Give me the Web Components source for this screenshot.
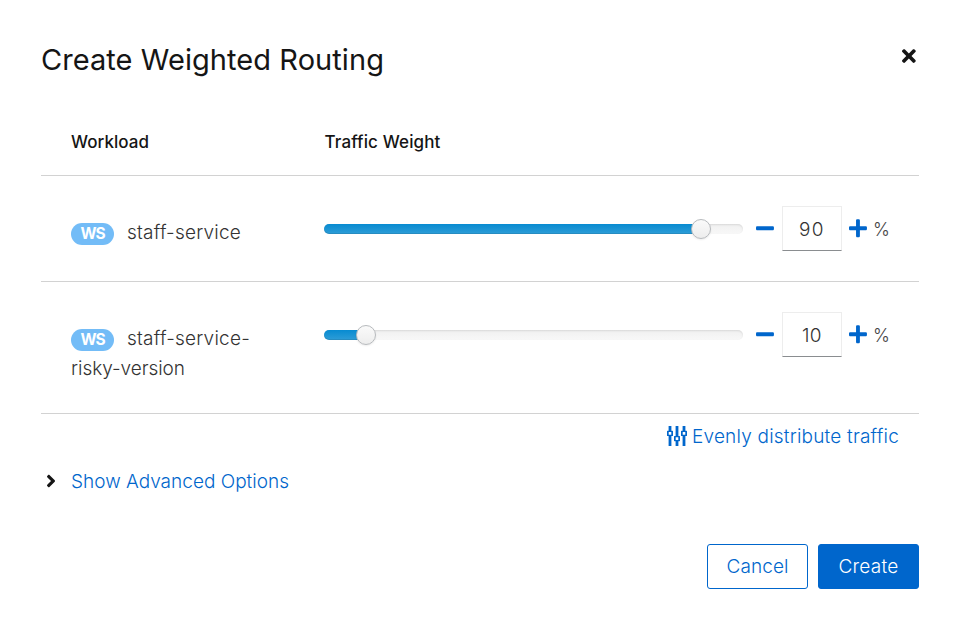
<!DOCTYPE html>
<html lang="en">
<head>
<meta charset="utf-8">
<title>Create Weighted Routing</title>
<style>
html,body{margin:0;background:#fff}
body{font-family:Inter,"Open Sans",sans-serif;font-weight:300;font-size:19px;line-height:30px;color:#151515}
</style>
</head>
<body>
<routing-dialog></routing-dialog>
<script>
// Inline label whose tracking is spread so that the text spans `span` pixels.
class UiText extends HTMLElement{
  connectedCallback(){
    const r=this.attachShadow({mode:'open'});
    r.innerHTML='<style>:host{display:inline-block;white-space:nowrap}span{display:inline-block}</style><span><slot></slot></span>';
    const s=r.querySelector('span'),n=this.textContent.length,w=+this.getAttribute('span');
    if(w){
      const natural=s.getBoundingClientRect().width;
      s.style.letterSpacing=((w-natural)/n).toFixed(3)+'px';
    }
  }
}

const ICONS={
  close:['0 0 352 512','<path d="M242.72 256l100.07-100.07c12.28-12.28 12.28-32.19 0-44.48l-22.24-22.24c-12.28-12.28-32.19-12.28-44.48 0L176 189.28 75.93 89.21c-12.28-12.28-32.19-12.28-44.48 0L9.21 111.45c-12.28 12.28-12.28 32.19 0 44.48L109.28 256 9.21 356.07c-12.28 12.28-12.28 32.19 0 44.48l22.24 22.24c12.28 12.28 32.2 12.28 44.48 0L176 322.72l100.07 100.07c12.28 12.28 32.2 12.28 44.48 0l22.24-22.24c12.28-12.28 12.28-32.19 0-44.48L242.72 256z"/>'],
  minus:['0 0 448 512','<path d="M416 208H32c-17.67 0-32 14.33-32 32v32c0 17.67 14.33 32 32 32h384c17.67 0 32-14.33 32-32v-32c0-17.67-14.33-32-32-32z"/>'],
  plus:['0 0 448 512','<path d="M416 208H272V64c0-17.67-14.33-32-32-32h-32c-17.67 0-32 14.33-32 32v144H32c-17.67 0-32 14.33-32 32v32c0 17.67 14.33 32 32 32h144v144c0 17.67 14.33 32 32 32h32c17.67 0 32-14.33 32-32V304h144c17.67 0 32-14.33 32-32v-32c0-17.67-14.33-32-32-32z"/>'],
  angle:['0 0 256 512','<path d="M224.3 273l-136 136c-9.4 9.4-24.6 9.4-33.9 0l-22.6-22.6c-9.4-9.4-9.4-24.6 0-33.9l96.4-96.4-96.4-96.4c-9.4-9.4-9.4-24.6 0-33.9L54.3 103c9.4-9.4 24.6-9.4 33.9 0l136 136c9.5 9.4 9.5 24.6.1 34z"/>'],
  sliders:['0 0 20 20','<path fill-rule="evenodd" d="M1.6 0h2.800v4.800H5.400a.6.6 0 0 1 .6.6V9.400a.6.6 0 0 1-.6.6h-1V20H1.600V10H.6A.6.6 0 0 1 0 9.400V5.400a.6.6 0 0 1 .6-.6h1zM1.700 6v2.800h2.600V6zM8.600 0h2.800v10h1a.6.6 0 0 1 .6.6v4a.6.6 0 0 1-.6.6h-1V20H8.600v-4.800h-1a.6.6 0 0 1-.6-.6v-4a.6.6 0 0 1 .6-.6h1zM8.700 11.200v2.800h2.600v-2.800zM15.600 0h2.800v4.800h1a.6.6 0 0 1 .6.6v4a.6.6 0 0 1-.6.6h-1V20h-2.800V10h-1a.6.6 0 0 1-.6-.6v-4a.6.6 0 0 1 .6-.6h1zM15.700 6v2.800h2.600V6z"/>']
};
class UiIcon extends HTMLElement{
  connectedCallback(){
    const [box,body]=ICONS[this.getAttribute('name')];
    this.attachShadow({mode:'open'}).innerHTML=`<style>:host{display:inline-flex;flex:none;height:20px}svg{display:block;height:100%;fill:currentColor}</style><svg viewBox="${box}" aria-hidden="true">${body}</svg>`;
  }
}

class WeightSlider extends HTMLElement{
  connectedCallback(){
    this.attachShadow({mode:'open'}).innerHTML=`<style>
:host{display:block;width:419px;height:10px}
.track{height:10px;border-radius:5px;position:relative;background:linear-gradient(#f0f0f0,#f8f8f8);box-shadow:inset 0 1px 2px rgba(0,0,0,.1)}
.fill{height:10px;width:${this.getAttribute('value')}%;border-radius:5px;background:linear-gradient(#078bd1,#2e9dd7);box-shadow:inset 0 -1px 0 rgba(0,0,0,.1)}
.thumb{position:absolute;box-sizing:border-box;top:-5px;left:calc(${this.getAttribute('value')}% - 10px);width:20px;height:20px;border-radius:50%;border:1px solid #b7babd;background:linear-gradient(#fafafa,#ededed);box-shadow:0 1px 2px rgba(0,0,0,.08)}
</style><div class="track"><div class="fill"></div><div class="thumb"></div></div>`;
  }
}

class WorkloadRow extends HTMLElement{
  connectedCallback(){
    const v=this.getAttribute('value');
    this.attachShadow({mode:'open'}).innerHTML=`<style>
:host{display:grid;grid-template-columns:253px 1fr;box-sizing:border-box;padding:30px 30px 0;border-bottom:1px solid #d2d2d2}
.name{padding-top:12px;color:#333;line-height:30px}
.badge{display:inline-flex;box-sizing:border-box;width:43px;height:22px;padding-top:1px;border-radius:11px;background:#73bcf7;color:#fff;font-size:15.5px;font-weight:700;align-items:center;justify-content:center;vertical-align:0;margin-right:13px;line-height:22px}
.ctl{display:flex;align-items:center;height:45px}
ui-icon{color:#06c}
.num{box-sizing:border-box;width:60px;height:45px;border:1px solid #ededed;border-bottom-color:#8a8d90;display:flex;align-items:center;justify-content:center;margin:0 7px 0 8px;padding-top:2px;color:#333}
.pct{margin-left:6px;padding-top:2px;color:#444}
</style><div class="name"><span class="badge"><ui-text span="24">WS</ui-text></span><slot></slot></div>
<div class="ctl"><weight-slider value="${v}"></weight-slider><ui-icon name="minus" style="margin-left:13px;height:20.5px"></ui-icon><span class="num"><ui-text span="${v==='90'?26:20}">${v}</ui-text></span><ui-icon name="plus" style="height:20.5px"></ui-icon><span class="pct"><ui-text span="15" style="font-size:18px">%</ui-text></span></div>`;
  }
}

class UiButton extends HTMLElement{
  connectedCallback(){
    this.attachShadow({mode:'open'}).innerHTML=`<style>
:host{display:flex;box-sizing:border-box;width:101px;height:45px;border:1px solid #06c;border-radius:3px;align-items:center;justify-content:center;color:#06c;background:#fff}
:host([primary]){background:#06c;color:#fff}
</style><slot></slot>`;
  }
}

class RoutingDialog extends HTMLElement{
  connectedCallback(){
    this.attachShadow({mode:'open'}).innerHTML=`<style>
:host{display:block;box-sizing:border-box;width:957px;height:630px;padding:40px 38px 0 41px}
header{display:flex;justify-content:space-between;height:69px}
h1{margin:0;font-size:29px;font-weight:400;line-height:39px}
header ui-icon{margin:6px 3px 0 0}
.heads{display:grid;grid-template-columns:253.5px 1fr;padding:18px 30px 18px;border-bottom:1px solid #d2d2d2;font-size:17px;font-weight:500}
.r1{height:106px}.r2{height:132px}
a{color:#06c;display:flex;align-items:center}
.even{justify-content:flex-end;padding-right:20px;height:30px;margin-top:8px;gap:5px}
.even ui-icon{margin-bottom:2px}
.adv{height:30px;margin-top:14px}
.adv ui-icon{color:#151515;width:10px;margin:0 15px 0 5px}
.adv ui-text{padding-top:2px}
footer{display:flex;justify-content:flex-end;gap:10px;margin-top:48px}
</style>
<header><h1><ui-text span="343">Create Weighted Routing</ui-text></h1><ui-icon name="close"></ui-icon></header>
<div class="heads"><div><ui-text span="78">Workload</ui-text></div><div><ui-text span="116">Traffic Weight</ui-text></div></div>
<workload-row class="r1" value="90"><ui-text span="114">staff-service</ui-text></workload-row>
<workload-row class="r2" value="10"><ui-text span="123">staff-service-</ui-text><br><ui-text span="114">risky-version</ui-text></workload-row>
<a class="even"><ui-icon name="sliders"></ui-icon><ui-text span="207">Evenly distribute traffic</ui-text></a>
<a class="adv"><ui-icon name="angle"></ui-icon><ui-text span="218">Show Advanced Options</ui-text></a>
<footer><ui-button><ui-text span="62">Cancel</ui-text></ui-button><ui-button primary><ui-text span="60">Create</ui-text></ui-button></footer>`;
  }
}
customElements.define('ui-text',UiText);
customElements.define('ui-icon',UiIcon);
customElements.define('weight-slider',WeightSlider);
customElements.define('ui-button',UiButton);
customElements.define('workload-row',WorkloadRow);
customElements.define('routing-dialog',RoutingDialog);
</script>
</body>
</html>
